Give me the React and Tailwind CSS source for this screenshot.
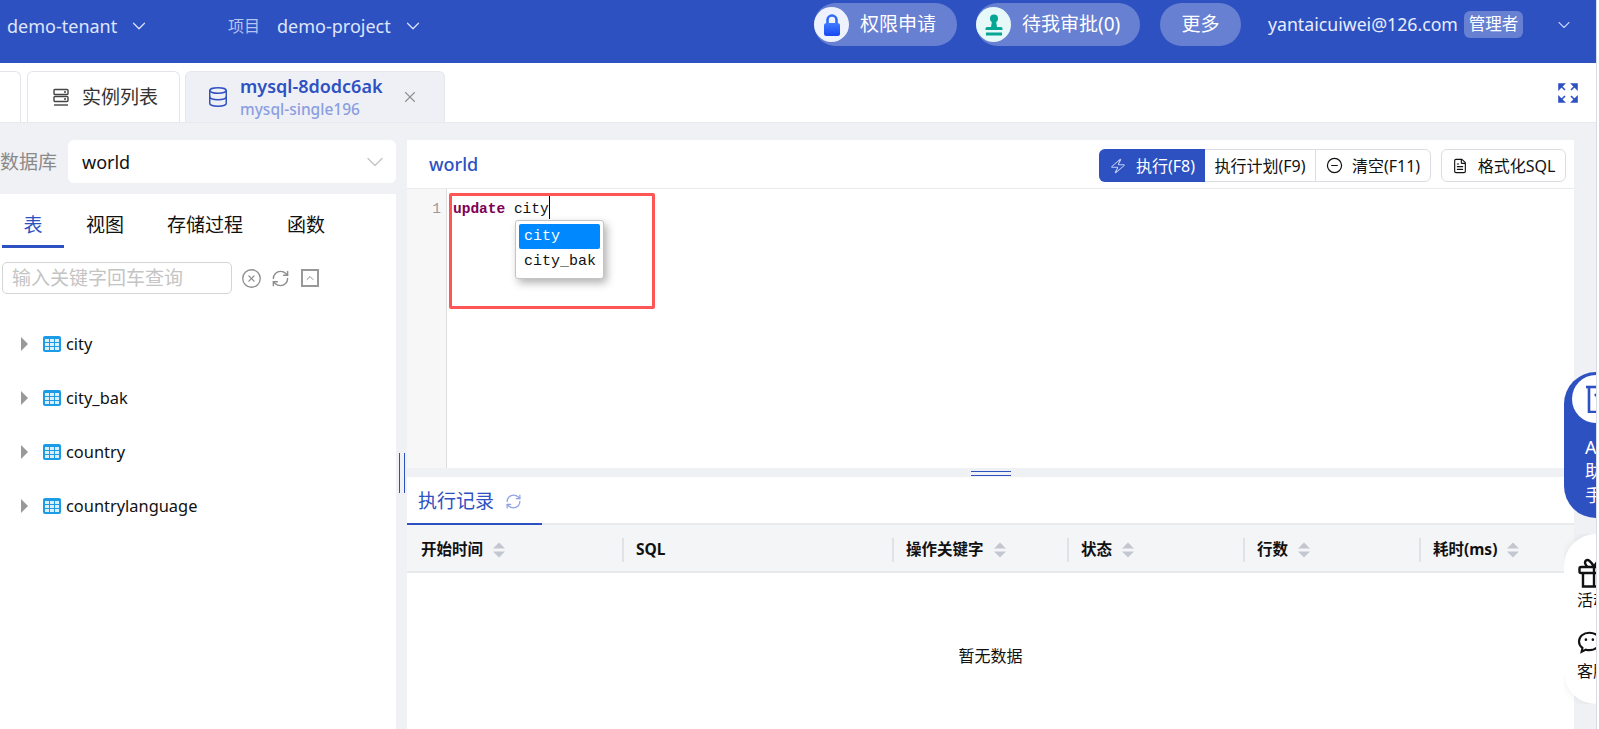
import { ChevronDown, X, Database, Zap, CircleMinus, FileText, RefreshCw, CircleX } from "lucide-react";

const tables = ["city", "city_bak", "country", "countrylanguage"];
const sideTabs = [
  { label: "表", cls: "w-[62px] ml-[2px] text-[#2e51c2] border-[#2e51c2]" },
  { label: "视图", cls: "ml-[22px] border-transparent" },
  { label: "存储过程", cls: "ml-[43px] border-transparent" },
  { label: "函数", cls: "ml-[44px] border-transparent" },
];
const columns = [
  { label: "开始时间", cls: "w-[215px] pl-[14px]", sort: true },
  { label: "SQL", cls: "w-[270px] pl-[12px]" },
  { label: "操作关键字", cls: "w-[175px] pl-[12px]", sort: true },
  { label: "状态", cls: "w-[176px] pl-[12px]", sort: true },
  { label: "行数", cls: "w-[176px] pl-[12px]", sort: true },
  { label: "耗时(ms)", cls: "w-[155px] pl-[12px]", sort: true },
];

const TableIcon = () => (
  <svg width="18" height="16" viewBox="0 0 18 16" className="shrink-0">
    <rect width="18" height="16" rx="2" fill="#1c9be6" />
    <g fill="#d9effc">
      <rect x="2" y="3" width="4" height="3" />
      <rect x="7" y="3" width="4" height="3" />
      <rect x="12" y="3" width="4" height="3" />
      <rect x="2" y="7" width="4" height="3" />
      <rect x="7" y="7" width="4" height="3" />
      <rect x="12" y="7" width="4" height="3" />
      <rect x="2" y="11" width="4" height="3" />
      <rect x="7" y="11" width="4" height="3" />
      <rect x="12" y="11" width="4" height="3" />
    </g>
  </svg>
);

const SortIcon = () => (
  <svg width="12" height="16" viewBox="0 0 12 16" className="ml-[10px] shrink-0" fill="#c3c7cf">
    <path d="M6 0.5 L12 6.5 H0 Z" />
    <path d="M6 15.5 L12 9.5 H0 Z" />
  </svg>
);

const ServerIcon = () => (
  <svg width="18" height="18" viewBox="0 0 18 18" fill="none" stroke="#444" strokeWidth="1.4">
    <rect x="2" y="1.5" width="14" height="5" rx="1" />
    <rect x="2" y="8.5" width="14" height="5" rx="1" />
    <path d="M2 17h14" />
    <path d="M12 4h2M12 11h2" />
  </svg>
);

const LockBadge = () => (
  <span className="w-[35px] h-[35px] rounded-full bg-[#eef2fe] flex items-center justify-center shrink-0">
    <svg width="18" height="22" viewBox="0 0 18 22">
      <defs>
        <linearGradient id="lockFill" x1="0" y1="0" x2="0" y2="1">
          <stop offset="0" stopColor="#3f7bff" />
          <stop offset="1" stopColor="#1746f0" />
        </linearGradient>
      </defs>
      <path d="M4.5 10V6a4.5 4.5 0 0 1 9 0v4" fill="none" stroke="#2f6bf5" strokeWidth="2.6" />
      <rect x="1" y="9" width="16" height="13" rx="2.5" fill="url(#lockFill)" />
    </svg>
  </span>
);

const StampBadge = () => (
  <span className="w-[35px] h-[35px] rounded-full bg-[#e6f8f8] flex items-center justify-center shrink-0">
    <svg width="18" height="22" viewBox="0 0 18 22" fill="#07a594">
      <circle cx="9" cy="4.5" r="4" />
      <path d="M7 7h4l1 6h4a1.5 1.5 0 0 1 1.5 1.5V16H.5v-1.5A1.5 1.5 0 0 1 2 13h4z" />
      <rect x="1" y="18.5" width="16" height="3" />
    </svg>
  </span>
);

const ExpandIcon = () => (
  <svg width="20" height="20" viewBox="0 0 20 20" fill="#2e51c2" stroke="#2e51c2" strokeWidth="1.6">
    <path d="M1 1h5L1 6z" />
    <path d="M19 1h-5l5 5z" />
    <path d="M1 19h5l-5-5z" />
    <path d="M19 19h-5l5-5z" />
    <path d="M3 3l4 4M17 3l-4 4M3 17l4-4M17 17l-4-4" fill="none" />
  </svg>
);

const AssistantIcon = () => (
  <svg width="34" height="28" viewBox="0 0 34 28" fill="none" stroke="#2e51c2" strokeWidth="2.6" className="shrink-0">
    <path d="M0 2h30" />
    <path d="M3 2v25h27" />
    <path d="M9 9l9 11" />
    <path d="M24 8l-9 14" />
  </svg>
);

const GiftIcon = () => (
  <svg width="32" height="30" viewBox="0 0 32 30" fill="none" stroke="#111" strokeWidth="2.4" className="shrink-0">
    <rect x="1.500" y="9" width="29" height="6" rx="1.500" />
    <path d="M5 15v13.500h22V15" />
    <path d="M16 9C13 3 10 1 8 2.500S7.500 8 10 9M16 9c3-6 6-8 8-6.500S24.500 8 22 9" />
    <path d="M16 9v19.500" />
  </svg>
);

const WechatIcon = () => (
  <svg width="30" height="26" viewBox="0 0 34 30" fill="none" stroke="#111" strokeWidth="2.4" className="shrink-0">
    <path d="M14 2C7 2 2 6.500 2 12c0 3 1.500 5.500 4 7.500L5 24l5-2.500c1.500.4 2.800.6 4 .6 6 0 12-4 12-10S21 2 14 2z" />
    <circle cx="10" cy="10" r="1.500" fill="#111" stroke="none" />
    <circle cx="18" cy="10" r="1.500" fill="#111" stroke="none" />
    <path d="M24 13c4 .5 7 3.500 7 7 0 2-1 3.800-2.500 5l.5 3-3-1.500" />
  </svg>
);

export default function App() {
  return (
    <div className="relative w-[1599px] h-[729px] overflow-hidden bg-white flex font-['Noto_Sans','Noto_Sans_CJK_SC',sans-serif] text-[#111]">
      <div className="w-[1596px] h-full flex flex-col bg-[#f0f1f5] shrink-0">
        {/* top bar */}
        <header className="h-[63px] shrink-0 bg-[#2e51c2] flex items-start text-[#dfe6fb]">
          <div className="h-[52px] flex items-center pl-[7px]">
            <span className="text-[18px] w-[121px]">demo-tenant</span>
            <ChevronDown className="w-[22px] h-[22px]" strokeWidth={1.3} />
            <span className="ml-[78px] text-[16px] text-[#b7c4ef]">项目</span>
            <span className="ml-[17px] text-[18px] w-[125px] whitespace-nowrap">demo-project</span>
            <ChevronDown className="w-[22px] h-[22px]" strokeWidth={1.3} />
          </div>
          <div className="ml-auto flex items-center pt-[3px] text-white">
            <button className="h-[43px] w-[143px] rounded-full bg-[#6780d2] flex items-center text-[19px] gap-[11px]">
              <LockBadge />
              权限申请
            </button>
            <button className="ml-[19px] h-[43px] w-[164px] rounded-full bg-[#6780d2] flex items-center text-[19px] gap-[11px]">
              <StampBadge />
              <span className="whitespace-nowrap">待我审批(0)</span>
            </button>
            <button className="ml-[20px] h-[43px] w-[81px] rounded-full bg-[#6780d2] text-[19px]">更多</button>
            <span className="ml-[27px] text-[17.7px] w-[196px] text-[#e8edfc] whitespace-nowrap">yantaicuiwei@126.com</span>
            <span className="h-[27px] w-[59px] rounded-md bg-[#6780d2] text-[16.5px] flex items-center justify-center whitespace-nowrap">管理者</span>
            <ChevronDown className="ml-[31px] mr-[22px] w-[20px] h-[20px] text-[#c5d0f3]" strokeWidth={1.3} />
          </div>
        </header>

        {/* tab bar */}
        <div className="h-[60px] shrink-0 bg-white border-b border-[#e8e9ee] flex items-end">
          <div className="w-[21px] h-[51px] bg-white border border-l-0 border-b-0 border-[#e4e5ea] rounded-tr-md" />
          <div className="ml-[6px] w-[153px] h-[51px] bg-white border border-b-0 border-[#e4e5ea] rounded-t-md flex items-center pl-[24px] gap-[12px] text-[19px] text-[#333]">
            <ServerIcon />
            实例列表
          </div>
          <div className="ml-[5px] w-[260px] h-[51px] bg-[#eff0f6] border border-b-0 border-[#e6e7ee] rounded-t-md flex items-center pl-[21px]">
            <Database className="w-[22px] h-[22px] text-[#2e51c2] shrink-0" strokeWidth={1.6} />
            <div className="ml-[11px] w-[161px] pt-[1px] flex flex-col leading-none whitespace-nowrap">
              <span className="text-[18px] font-semibold text-[#2e51c2] leading-[22px]">mysql-8dodc6ak</span>
              <span className="text-[15.5px] font-medium text-[#8a9ee0] leading-[24px]">mysql-single196</span>
            </div>
            <X className="w-[18px] h-[18px] text-[#8f8f8f]" strokeWidth={1.5} />
          </div>
          <div className="ml-auto self-center mr-[18px]">
            <ExpandIcon />
          </div>
        </div>

        {/* workspace */}
        <div className="flex-1 flex min-h-0 pt-[17px]">
          <aside className="w-[396px] shrink-0 flex flex-col">
            <div className="h-[43px] flex items-center">
              <span className="w-[68px] pt-[1px] text-[19px] text-[#8a8a8a] whitespace-nowrap">数据库</span>
              <div className="flex-1 h-full bg-white rounded-md flex items-center pl-[14px] pr-[7px] pt-[1px] text-[18px]">
                world
                <ChevronDown className="ml-auto w-[28px] h-[28px] text-[#c4c4c4]" strokeWidth={1.2} />
              </div>
            </div>
            <div className="mt-[11px] flex-1 bg-white">
              <div className="flex h-[54px] text-[19px]">
                {sideTabs.map((tab) => (
                  <span key={tab.label} className={`h-[54px] border-b-[3px] pt-[18px] leading-[26px] text-center ${tab.cls}`}>
                    {tab.label}
                  </span>
                ))}
              </div>
              <div className="mt-[14px] flex items-center pl-[2px]">
                <div className="w-[230px] h-[32px] border border-[#d4d4d4] rounded-[5px] pl-[9px] pt-[1px] flex items-center text-[19px] text-[#c4c4c4] whitespace-nowrap">
                  输入关键字回车查询
                </div>
                <CircleX className="ml-[9px] w-[21px] h-[21px] text-[#8d8d8d]" strokeWidth={1.5} />
                <RefreshCw className="ml-[9px] w-[19px] h-[19px] text-[#8d8d8d]" strokeWidth={1.8} />
                <span className="ml-[11px] w-[18px] h-[18px] border-2 border-[#999] flex items-center justify-center">
                  <ChevronDown className="w-[12px] h-[12px] rotate-180 text-[#888]" strokeWidth={2} />
                </span>
              </div>
              <ul className="mt-[23px]">
                {tables.map((name) => (
                  <li key={name} className="h-[54px] flex items-center pl-[21px] text-[16.4px]">
                    <span className="w-0 h-0 border-y-[7px] border-y-transparent border-l-[7px] border-l-[#999]" />
                    <span className="ml-[15px]"><TableIcon /></span>
                    <span className="ml-[5px]">{name}</span>
                  </li>
                ))}
              </ul>
            </div>
          </aside>

          {/* vertical splitter */}
          <div className="w-[11px] shrink-0 flex items-start justify-center">
            <div className="mt-[313px] w-[6px] h-[40px] border-x border-[#2e51c2]" />
          </div>

          <main className="w-[1167px] shrink-0 flex flex-col">
            <div className="h-[49px] shrink-0 bg-white border-b border-[#e9eaee] flex items-center pl-[22px]">
              <span className="text-[18px] font-medium text-[#2e51c2]">world</span>
              <div className="ml-auto self-start mt-[9px] flex items-center h-[33px] text-[16px]">
                <div className="flex h-full border border-[#dcdde2] rounded-md">
                  <button className="-my-px -ml-px w-[106px] h-[33px] bg-[#2e51c2] text-white rounded-l-md flex items-center justify-center gap-[10px] pl-[1px] whitespace-nowrap">
                    <Zap className="w-[16px] h-[16px] text-[#c5d0f3] -skew-x-12" strokeWidth={1.6} />
                    执行(F8)
                  </button>
                  <button className="w-[111px] border-r border-[#dcdde2] flex items-center justify-center whitespace-nowrap">执行计划(F9)</button>
                  <button className="w-[114px] flex items-center justify-center gap-[9px] whitespace-nowrap">
                    <CircleMinus className="w-[17px] h-[17px]" strokeWidth={1.7} />
                    清空(F11)
                  </button>
                </div>
                <button className="ml-[10px] mr-[8px] w-[125px] h-full border border-[#dcdde2] rounded-md flex items-center justify-center gap-[10px] whitespace-nowrap">
                  <FileText className="w-[16px] h-[16px]" strokeWidth={1.7} />
                  格式化SQL
                </button>
              </div>
            </div>

            {/* editor */}
            <div className="relative h-[279px] shrink-0 bg-white flex font-['Liberation_Mono',monospace] text-[14.5px]">
              <div className="w-[40px] shrink-0 bg-[#f7f7f7] border-r border-[#dddddd] text-right pr-[5px] pt-[10px] leading-[20px] text-[#999]">1</div>
              <div className="pl-[6px] pt-[10px] leading-[20px] flex items-start whitespace-pre">
                <span className="font-bold text-[#7f0055]">update</span>
                <span> city</span>
                <span className="w-px h-[23px] bg-black -mt-[3px]" />
              </div>
              {/* highlight box from the annotated screenshot */}
              <div className="absolute left-[42px] top-[4px] w-[206px] h-[116px] border-[3px] border-[#ff5555] rounded-[2px]" />
              {/* autocomplete */}
              <div className="absolute left-[108px] top-[31px] w-[89px] h-[59px] bg-white border border-[#c4c4c4] rounded-[3px] shadow-[3px_4px_8px_rgba(0,0,0,0.3)] px-[3px] pt-[3px] text-[15px] leading-[25px]">
                <div className="h-[25px] bg-[#0088ff] text-white rounded-[2px] pl-[5px]">city</div>
                <div className="h-[25px] pl-[5px]">city_bak</div>
              </div>
            </div>

            {/* horizontal splitter */}
            <div className="h-[9px] shrink-0 flex justify-center pt-[3px]">
              <div className="w-[40px] h-[5px] border-y border-[#2e51c2]" />
            </div>

            {/* records */}
            <div className="flex-1 bg-white flex flex-col min-h-0">
              <div className="h-[48px] shrink-0 border-b-2 border-[#e9eaee] relative flex items-center pl-[11px] pt-[3px] text-[19px] text-[#2e51c2]">
                执行记录
                <RefreshCw className="ml-[11px] w-[17px] h-[17px] text-[#8fa3e6]" strokeWidth={1.8} />
                <span className="absolute left-0 -bottom-[2px] w-[135px] h-[2px] bg-[#2e51c2]" />
              </div>
              <div className="h-[48px] shrink-0 bg-[#f4f5f7] border-b-2 border-[#e8e9eb] flex items-center pt-[3px] text-[15.5px] font-bold">
                {columns.map((col, i) => (
                  <div key={col.label} className={`h-[24px] flex items-center whitespace-nowrap ${i > 0 ? "border-l-2 border-[#e1e2e6]" : ""} ${col.cls}`}>
                    {col.label}
                    {col.sort && <SortIcon />}
                  </div>
                ))}
              </div>
              <div className="flex-1 flex justify-center pt-[71px] text-[16px]">暂无数据</div>
            </div>
          </main>
        </div>
      </div>

      {/* right edge of the window */}
      <div className="w-[1px] h-full bg-[#d9dbe8] shrink-0" />

      {/* floating helpers, cut off by the window edge */}
      <div className="absolute left-[1564px] top-[372px] w-[32px] h-[146px] overflow-hidden">
        <div className="w-[70px] h-[146px] bg-[#2e51c2] rounded-[32px] flex flex-col items-start pt-[3px] pl-[21px] text-white text-[18px] leading-[24px]">
          <span className="w-[48px] h-[48px] -ml-[13px] rounded-full bg-white flex items-center pl-[14px]">
            <AssistantIcon />
          </span>
          <span className="mt-[12px]">AI</span>
          <span>助</span>
          <span>手</span>
        </div>
      </div>
      <div className="absolute left-[1564px] top-[534px] w-[32px] h-[170px] overflow-hidden">
        <div className="w-[70px] h-[170px] bg-white rounded-[32px] shadow-[0_0_8px_rgba(0,0,0,0.08)] flex flex-col items-start pt-[24px] pl-[13px] text-[16px] leading-[22px]">
          <span className="ml-[1px] h-[31px]"><GiftIcon /></span>
          <span className="whitespace-nowrap">活动</span>
          <span className="mt-[20px]"><WechatIcon /></span>
          <span className="mt-[3px] whitespace-nowrap">客服</span>
        </div>
      </div>
    </div>
  );
}
